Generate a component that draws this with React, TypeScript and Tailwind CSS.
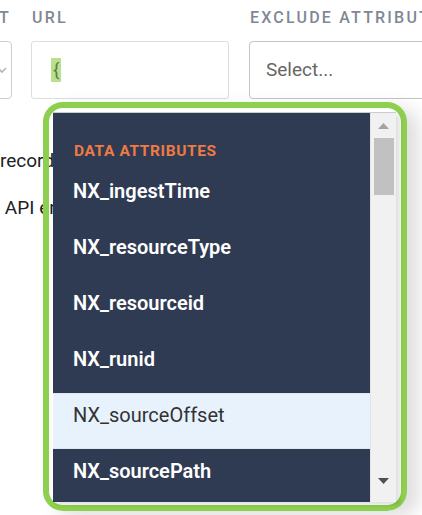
import React from "react";

const items = [
  { label: "NX_ingestTime", active: false },
  { label: "NX_resourceType", active: false },
  { label: "NX_resourceid", active: false },
  { label: "NX_runid", active: false },
  { label: "NX_sourceOffset", active: true },
  { label: "NX_sourcePath", active: false },
];

export default function App() {
  return (
    <div
      className="relative w-[422px] h-[515px] overflow-hidden bg-white"
      style={{ fontFamily: "Roboto, 'Noto Sans', Arial, sans-serif" }}
    >
      {/* Form row */}
      <div className="flex ml-[-108px] pt-[6px] gap-[19px]">
        <div className="w-[120px] shrink-0 flex flex-col">
          <div className="h-[24px] flex justify-end pr-[1px] text-[16px] leading-[24px] font-medium tracking-[2.2px] text-[#7f8896] whitespace-nowrap">
            FORMAT
          </div>
          <div className="mt-[11px] h-[58px] rounded-[4px] border border-[#cfcfcf] flex items-center justify-end pr-[4px]">
            <svg width="10" height="10" viewBox="0 0 10 10">
              <path d="M1 3 L5 7 L9 3" fill="none" stroke="#b5b5b5" strokeWidth="1.6" />
            </svg>
          </div>
        </div>
        <div className="w-[198px] shrink-0 flex flex-col">
          <div className="h-[24px] pl-[1px] text-[16px] leading-[24px] font-medium tracking-[2.2px] text-[#7f8896]">
            URL
          </div>
          <div className="mt-[11px] h-[58px] rounded-[3px] border border-[#dedede] flex items-center pl-[19px]">
            <span className="bg-[#b9e08f] text-[#5f7f3f] text-[19px] leading-[24px] px-[2px]">{"{"}</span>
          </div>
        </div>
        <div className="w-[200px] shrink-0 ml-[1px] flex flex-col">
          <div className="h-[24px] pl-[1px] text-[16px] leading-[24px] font-medium tracking-[2.2px] text-[#7f8896] whitespace-nowrap">
            EXCLUDE ATTRIBUTES
          </div>
          <div className="mt-[11px] h-[58px] rounded-[4px] border border-[#c4c4c4] flex items-center pl-[16px] text-[19px] text-[#666]">
            Select...
          </div>
        </div>
      </div>

      {/* Body text behind overlay */}
      <div className="mt-[49px] flex flex-col gap-[21px] text-[19px] leading-[26px] text-[#222] whitespace-nowrap">
        <div>records</div>
        <div className="ml-[-24px]">via API endpoint</div>
      </div>

      {/* Green highlight frame */}
      <div className="absolute left-[43px] top-[102px] w-[364px] h-[409px] rounded-[20px] border-[6px] border-[#8dcf4e] shadow-[12px_6px_18px_rgba(0,0,0,0.13)]" />

      {/* Dropdown panel */}
      <div className="absolute left-[53px] top-[112px] w-[343px] h-[390px] flex bg-[#f1f1f1] border-t border-[#c9ccd1] shadow-[4px_3px_4px_rgba(0,0,0,0.12)] overflow-hidden">
        <div className="w-[317px] h-full bg-[#2f3b52] flex flex-col overflow-hidden">
          <div className="h-[56px] shrink-0 pl-[21px] pt-[29px] text-[15.5px] leading-[18px] font-bold tracking-[0.6px] text-[#ee7a45] whitespace-nowrap">
            DATA ATTRIBUTES
          </div>
          {items.map((it) => (
            <div
              key={it.label}
              className={
                it.active
                  ? "h-[56px] shrink-0 pl-[20px] pt-[8px] text-[20px] leading-[26px] font-normal text-[#333] bg-[#e8f2fd] border-y border-[#dfe6ee] whitespace-nowrap"
                  : "h-[56px] shrink-0 pl-[20px] pt-[9px] text-[20px] leading-[26px] font-semibold text-white whitespace-nowrap"
              }
            >
              {it.label}
            </div>
          ))}
        </div>
        <div className="flex-1 h-full bg-[#f1f1f1] flex flex-col items-center border-l border-[#e4e4e4]">
          <div className="h-[25px] w-full flex items-center justify-center">
            <svg width="11" height="6" viewBox="0 0 11 6">
              <path d="M0 6 L5.5 0 L11 6 Z" fill="#a3a3a3" />
            </svg>
          </div>
          <div className="w-[20px] h-[57px] bg-[#c1c1c1]" />
          <div className="flex-1" />
          <div className="h-[28px] w-full flex items-start justify-center pt-[4px]">
            <svg width="11" height="6" viewBox="0 0 11 6">
              <path d="M0 0 L11 0 L5.5 6 Z" fill="#505050" />
            </svg>
          </div>
        </div>
      </div>
    </div>
  );
}
